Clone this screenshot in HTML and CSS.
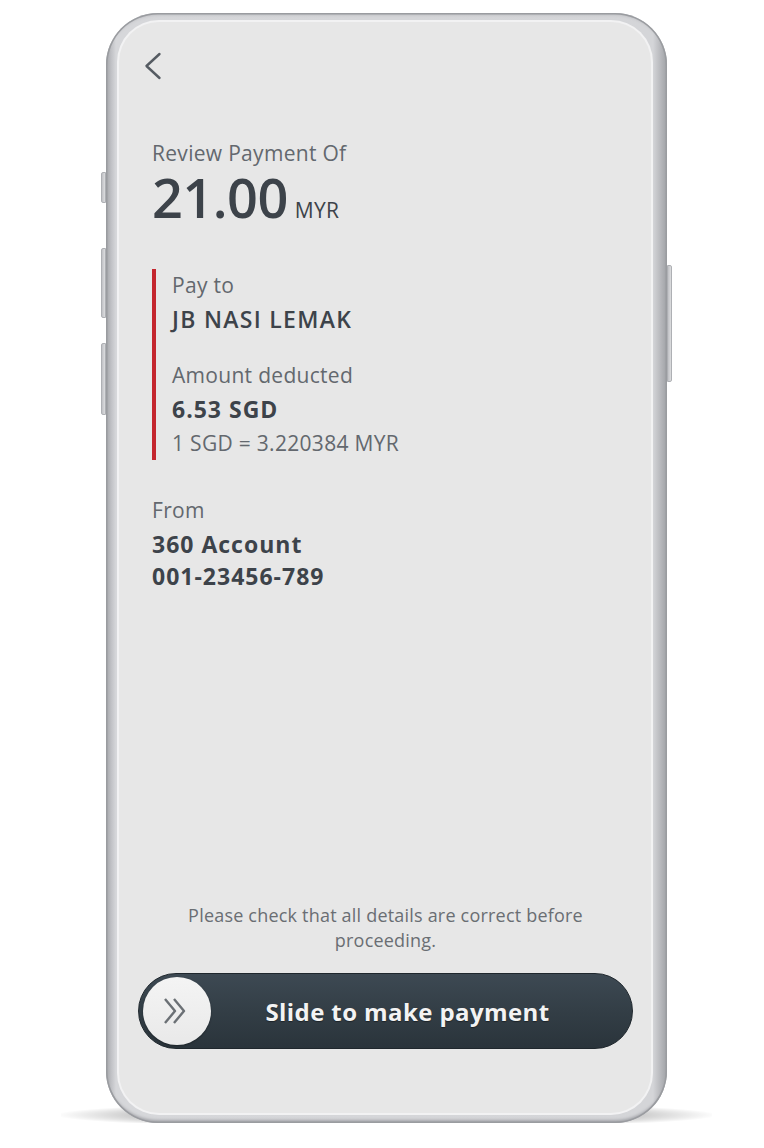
FILE: index.html
```html
<!DOCTYPE html>
<html>
  <head>
    <meta charset="UTF-8" />
    <meta name="viewport" content="width=device-width, initial-scale=1.0" />
    <title>Review Payment</title>
    <link rel="stylesheet" href="styles.css">
  </head>
  <body>
    <div class="phone">
      <span class="side-btn btn-1"></span>
      <span class="side-btn btn-2"></span>
      <span class="side-btn btn-3"></span>
      <span class="side-btn btn-power"></span>

      <div class="screen">
        <div class="content">
          <a class="back" href="#">
            <svg width="18" height="28" viewBox="0 0 18 28">
              <polyline points="15.5,2 2.5,14 15.5,26" fill="none" stroke="#555b62" stroke-width="2.4" stroke-linecap="round" stroke-linejoin="round" />
            </svg>
          </a>

          <p class="title">Review Payment Of</p>
          <p class="amount">21.00<span class="currency">MYR</span></p>

          <div class="details">
            <p class="label">Pay to</p>
            <p class="value merchant">JB NASI LEMAK</p>
            <p class="label">Amount deducted</p>
            <p class="value">6.53 SGD</p>
            <p class="label rate">1 SGD = 3.220384 MYR</p>
          </div>

          <div class="from">
            <p class="label">From</p>
            <p class="value">360 Account</p>
            <p class="value account-no">001-23456-789</p>
          </div>
        </div>

        <p class="notice">Please check that all details are correct before proceeding.</p>

        <div class="slider">
          <div class="knob">
            <svg width="26" height="30" viewBox="0 0 26 30">
              <polyline points="3,3 13,15 3,27" fill="none" stroke="#6b7075" stroke-width="2.4" stroke-linejoin="round" />
              <polyline points="12,3 22,15 12,27" fill="none" stroke="#6b7075" stroke-width="2.4" stroke-linejoin="round" />
            </svg>
          </div>
          <span class="slider-text">Slide to make payment</span>
        </div>
      </div>
    </div>
  </body>
</html>
```

FILE: styles.css
```css
* {
  box-sizing: border-box;
  margin: 0;
  padding: 0;
}

body {
  font-family: "Open Sans", "Liberation Sans", sans-serif;
  background-color: #fff;
  color: #3d434a;
}

.phone {
  position: relative;
  width: 561px;
  height: 1110px;
  margin: 13px 0 0 106px;
  padding: 9px 16px 10px 13px;
  border-radius: 52px;
  background: linear-gradient(90deg, #a2a4a8 0, #bfc0c4 5px, #d6d7da 10px, #d4d5d8 calc(100% - 14px), #bdbec2 calc(100% - 8px), #9fa1a5 100%);
  box-shadow: inset 0 0 0 1.5px #9a9ca0, inset 0 -5px 3px -2px #a4a5aa, inset 0 4px 3px -2px #b9babe;
}

.phone::after {
  content: "";
  position: absolute;
  left: -45px;
  right: -45px;
  bottom: -5px;
  height: 26px;
  z-index: -1;
  background: radial-gradient(ellipse at center, rgba(0, 0, 0, 0.55) 0, rgba(0, 0, 0, 0.2) 55%, rgba(0, 0, 0, 0) 72%);
}

.side-btn {
  position: absolute;
  width: 5px;
  background: linear-gradient(90deg, #c0c1c5, #dcdddf);
  border: 1px solid #aeb0b4;
}

.btn-1 {
  left: -5px;
  top: 159px;
  height: 31px;
  border-radius: 2px 0 0 2px;
}

.btn-2 {
  left: -5px;
  top: 235px;
  height: 70px;
  border-radius: 2px 0 0 2px;
}

.btn-3 {
  left: -5px;
  top: 330px;
  height: 72px;
  border-radius: 2px 0 0 2px;
}

.btn-power {
  right: -5px;
  top: 252px;
  height: 117px;
  border-radius: 0 2px 2px 0;
}

.screen {
  display: flex;
  flex-direction: column;
  height: 100%;
  padding: 30px 18px 64px 19px;
  border-radius: 40px;
  background-color: #e7e7e7;
  box-shadow: 0 0 0 2px #f2f2f3;
}

.content {
  padding-left: 14px;
}

.back {
  display: block;
  width: 18px;
  height: 28px;
  margin-left: -8px;
}

.back svg {
  display: block;
}

.title {
  margin-top: 59px;
  font-size: 21px;
  line-height: 28px;
  letter-spacing: 0.3px;
  color: #63686e;
}

.amount {
  font-size: 54px;
  line-height: 60px;
  font-weight: 600;
  letter-spacing: -0.5px;
}

.currency {
  margin-left: 7px;
  font-size: 21px;
  line-height: 1;
  font-weight: 400;
  letter-spacing: 0.3px;
}

.details {
  margin-top: 42px;
  padding: 2px 0 3px 16px;
  border-left: 4px solid #c4262e;
}

.label {
  font-size: 21px;
  line-height: 28px;
  letter-spacing: 0.3px;
  color: #63686e;
}

.value {
  margin-top: 5px;
  font-size: 23px;
  line-height: 30px;
  font-weight: 700;
  letter-spacing: 1px;
}

.merchant {
  font-weight: 600;
  letter-spacing: 1.3px;
}

.value + .label {
  margin-top: 27px;
}

.details .rate {
  margin-top: 5px;
}

.from {
  margin-top: 36px;
}

.account-no {
  margin-top: 2px;
}

.notice {
  margin-top: auto;
  padding: 0 30px;
  font-size: 18px;
  line-height: 25px;
  letter-spacing: 0.2px;
  text-align: center;
  color: #6a6e73;
}

.slider {
  display: flex;
  align-items: center;
  height: 76px;
  margin-top: 20px;
  padding-left: 4px;
  border: 1px solid #1f272d;
  border-radius: 38px;
  background: linear-gradient(180deg, #3d4953 0, #333e46 50%, #2a343b 100%);
}

.knob {
  display: flex;
  align-items: center;
  justify-content: center;
  width: 68px;
  height: 68px;
  padding-right: 4px;
  border-radius: 50%;
  background: linear-gradient(180deg, #f4f4f4, #e9e9e9);
  box-shadow: 0 1px 2px rgba(0, 0, 0, 0.35);
}

.slider-text {
  flex: 1;
  padding-right: 28px;
  text-align: center;
  font-size: 24px;
  font-weight: 700;
  letter-spacing: 0.4px;
  color: #f3f3f3;
  text-shadow: 0 1px 1px rgba(0, 0, 0, 0.4);
}
```
